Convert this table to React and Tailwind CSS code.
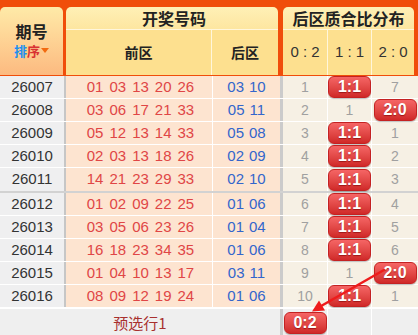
import React from 'react';

const rows = [
  ['26007', ['01', '03', '13', '20', '26'], ['03', '10'], ['1', '1:1', '7']],
  ['26008', ['03', '06', '17', '21', '33'], ['05', '11'], ['2', '1', '2:0']],
  ['26009', ['05', '12', '13', '14', '33'], ['05', '08'], ['3', '1:1', '1']],
  ['26010', ['02', '03', '13', '18', '26'], ['02', '09'], ['4', '1:1', '2']],
  ['26011', ['14', '21', '23', '29', '33'], ['02', '10'], ['5', '1:1', '3']],
  ['26012', ['01', '02', '09', '22', '25'], ['01', '06'], ['6', '1:1', '4']],
  ['26013', ['03', '05', '06', '23', '26'], ['01', '04'], ['7', '1:1', '5']],
  ['26014', ['16', '18', '23', '34', '35'], ['01', '06'], ['8', '1:1', '6']],
  ['26015', ['01', '04', '10', '13', '17'], ['03', '11'], ['9', '1', '2:0']],
  ['26016', ['08', '09', '12', '19', '24'], ['01', '06'], ['10', '1:1', '1']],
];

const Badge = ({ text }) => (
  <div className="w-[43px] h-[22px] rounded-[6px] bg-gradient-to-b from-[#f56565] to-[#d02828] border border-[#c42222] shadow-[0_1px_1px_rgba(0,0,0,0.25)] flex items-center justify-center text-white font-bold text-[16px] [text-shadow:0_1px_1px_rgba(120,0,0,0.6)] z-10">
    {text}
  </div>
);

const DistCell = ({ value, className }) => (
  <div className={`flex items-center justify-center ${className}`}>
    {value.includes(':') ? <Badge text={value} /> : <span className="text-[#a0a0a0] text-[14px]">{value}</span>}
  </div>
);

const Row = ({ row, last }) => {
  const [issue, front, back, dist] = row;
  return (
    <div className={`flex h-[23px] ${last ? '' : 'border-b border-white'}`}>
      <div className="w-[66px] bg-[#efeff0] border-r-2 border-[#c6c6c6] flex items-center justify-center text-[15px] text-[#333]">
        {issue}
      </div>
      <div className="w-[147px] bg-[#fde4d0] border-r border-white flex items-center justify-center gap-[6px] pl-[3px] text-[15px] text-[#e04646]">
        {front.map((n, i) => (
          <span key={i}>{n}</span>
        ))}
      </div>
      <div className="w-[70px] bg-[#fde4d0] border-r-[3px] border-[#cbcbcb] flex items-center justify-center gap-[5px] text-[15px] text-[#3366cc]">
        {back.map((n, i) => (
          <span key={i}>{n}</span>
        ))}
      </div>
      <DistCell value={dist[0]} className="w-[45px] bg-[#f6f0e4] border-r border-white" />
      <DistCell value={dist[1]} className="w-[44px] bg-[#f6f0e4] border-r border-white" />
      <DistCell value={dist[2]} className="flex-1 bg-[#f6f0e4]" />
    </div>
  );
};

export default function App() {
  return (
    <div className="relative w-[418px] h-[335px] overflow-hidden bg-white font-['Liberation_Sans','Noto_Sans_CJK_SC',sans-serif]">
      {/* header */}
      <div className="flex h-[76px] bg-[#f04d0a] pt-[7px] pb-px font-['Noto_Sans_CJK_SC',sans-serif] font-bold text-[#222]">
        <div className="w-[63px] h-[68px] rounded-t-[5px] bg-gradient-to-b from-[#feeaa8] to-[#fcba80] flex flex-col items-center justify-end gap-[2px] pb-[16px]">
          <p className="h-[18px] text-[16px] leading-[18px]">期号</p>
          <p className="h-[17px] flex items-center text-[13px] leading-[17px]">
            <span className="text-[#1e8fef]">排</span>
            <span className="text-[#d93232]">序</span>
            <span className="ml-[1px] w-0 h-0 border-l-[4px] border-r-[4px] border-t-[5px] border-l-transparent border-r-transparent border-t-[#f26a10]"></span>
          </p>
        </div>
        <div className="w-[212px] ml-[3px] rounded-t-[5px] flex flex-col overflow-hidden">
          <div className="h-[23px] border-b border-[#fff6dc] bg-gradient-to-b from-[#fff0b6] to-[#fde6a0] flex items-center justify-center text-[16px] pl-[4px]">
            开奖号码
          </div>
          <div className="flex-1 flex bg-[#fde08f] text-[14px]">
            <div className="w-[146px] border-r border-[#fff6dc] flex items-center justify-center">前区</div>
            <div className="flex-1 flex items-center justify-center">后区</div>
          </div>
        </div>
        <div className="w-[131px] ml-[5px] rounded-t-[5px] flex flex-col overflow-hidden">
          <div className="h-[23px] border-b border-[#fff6dc] bg-gradient-to-b from-[#fff0b6] to-[#fde6a0] flex items-center justify-center text-[16px]">
            后区质合比分布
          </div>
          <div className="flex-1 flex bg-[#fde08f] text-[15px] font-normal text-[#333] font-['Liberation_Sans',sans-serif]">
            <div className="w-[45px] border-r border-[#fff6dc] flex items-center justify-center whitespace-pre">0 : 2</div>
            <div className="w-[44px] border-r border-[#fff6dc] flex items-center justify-center whitespace-pre">1 : 1</div>
            <div className="flex-1 flex items-center justify-center whitespace-pre">2 : 0</div>
          </div>
        </div>
      </div>

      {/* body */}
      <div>
        {rows.slice(0, 5).map((r, i) => (
          <Row key={r[0]} row={r} last={i === 4} />
        ))}
      </div>
      <div className="h-[2px] bg-[#d2d2d2]"></div>
      <div>
        {rows.slice(5).map((r) => (
          <Row key={r[0]} row={r} />
        ))}
      </div>

      {/* footer */}
      <div className="flex h-[30px] pt-[1px]">
        <div className="w-[283px] bg-[#efefef] border-r-[3px] border-[#cbcbcb] flex items-start justify-center pt-[3px] text-[15px] text-[#a8302e] font-['Noto_Sans_CJK_SC',sans-serif]">
          预选行1
        </div>
        <div className="w-[45px] bg-[#efefef] border-r border-white flex justify-center pt-[3px]">
          <Badge text="0:2" />
        </div>
        <div className="w-[44px] bg-[#efefef] border-r border-white"></div>
        <div className="flex-1 bg-[#efefef]"></div>
      </div>

      {/* arrow */}
      <svg className="absolute left-0 top-0 pointer-events-none z-20" width="418" height="335" viewBox="0 0 418 335">
        <line x1="384" y1="270" x2="322" y2="305.5" stroke="#ee1c1c" strokeWidth="2.5" strokeLinecap="round" />
        <polygon points="312,311.5 319,300.5 325,310.5" fill="#ee1c1c" />
      </svg>
    </div>
  );
}
